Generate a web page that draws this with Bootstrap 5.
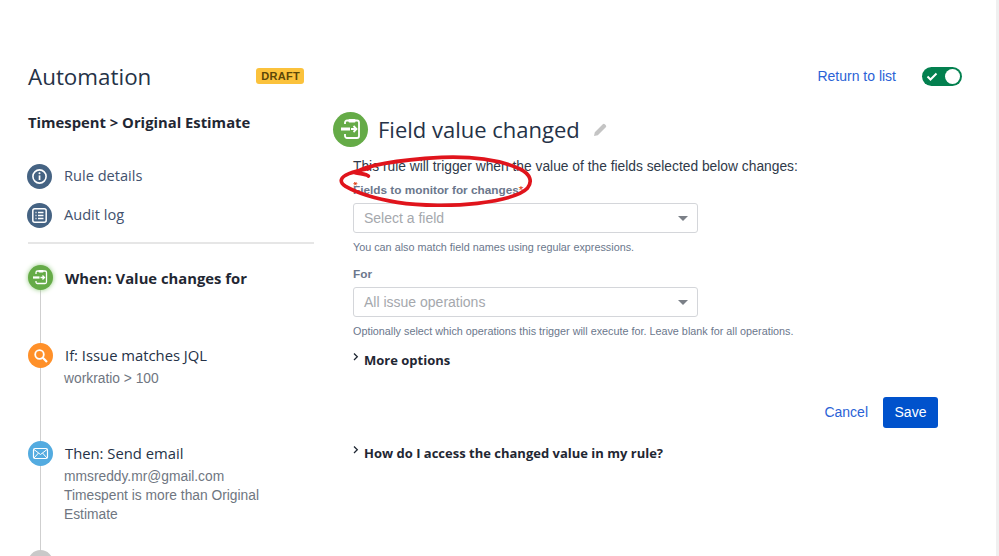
<!DOCTYPE html>
<html lang="en">
<head>
<meta charset="utf-8">
<title>Automation</title>
<link href="https://cdn.jsdelivr.net/npm/bootstrap@5.3.0/dist/css/bootstrap.min.css" rel="stylesheet">
<style>
html,body{height:100%;overflow:hidden}
body{font-family:"Liberation Sans",Arial,sans-serif;color:#172b4d;background:#fff;border-right:3px solid #f0f0f0}
.page-wrap{position:relative;height:556px;overflow:hidden;padding:62px 34px 0 28px}
.head-row{height:32px}
.page-title{font-family:"Open Sans",sans-serif;font-size:22.4px;font-weight:400;color:#253247;margin:-2px 0 0;line-height:32px}
.draft-tag{background:#fbc23c;color:#5c4708;font-size:11px;font-weight:700;letter-spacing:.3px;border-radius:3px;padding:0 5px;line-height:16px;height:16px;margin:-5px 0 0 105px;width:48px;text-align:center}
.return-link{font-size:14px;color:#2a62d6;text-decoration:none;margin:-4px 26px 0 0}
.flip{width:40px;height:19px;border-radius:10px;background:#03804f;padding:2px;margin-top:-4px}
.flip i{display:block;width:15px;height:15px;border-radius:50%;background:#fff}
.side-col{width:286px;flex:none}
.main-col{flex:1;margin-left:19px;min-width:0}
.rule-name{font-family:"Open Sans",sans-serif;font-weight:700;font-size:14.8px;color:#1f2733;line-height:20px;margin:18px 0 0}
.nav-line{display:flex;align-items:center;height:26px;font-family:"Open Sans",sans-serif;font-size:14.6px;color:#42526e}
.nav-first{margin-top:31px}
.nav-second{margin-top:13px}
.ic{width:25px;height:25px;border-radius:50%;flex:none;display:flex;align-items:center;justify-content:center;margin-right:12px;margin-left:-1px}
.ic-blue{background:#456383}
.ic-green{background:#65ab47;box-shadow:0 0 5px #8fc97a}
.ic-orange{background:#ff9029}
.ic-sky{background:#53abe0}
.ic-gray{background:#c9c9c9}
.side-rule{border-top:2px solid #e6e6e6;margin:14px 0 0}
.flow-list{position:relative;margin-top:21px}
.flow-list::before{content:"";position:absolute;left:12px;top:24px;bottom:-60px;width:1px;background:#cfcfcf}
.step{position:relative;display:flex}
.step-when{height:78px}
.step-if{height:98px}
.step-then{height:109px}
.step-head{font-family:"Open Sans",sans-serif;font-size:14.8px;color:#253247;line-height:20px;margin-top:2px}
.step-when .step-head{font-weight:700;color:#1f2733;margin-top:3px}
.step-sub{font-size:13.8px;color:#6f7681;line-height:19px;margin-top:4px;margin-left:-1px}
.step .ic{margin-left:0;margin-right:12px}
.trigger-head{margin-top:16px;height:38px}
.trigger-ic{width:35px;height:35px;border-radius:50%;background:#65ab47;display:flex;align-items:center;justify-content:center;flex:none;margin-right:10px}
.trigger-title{font-family:"Open Sans",sans-serif;font-size:22px;color:#253247;margin:0;line-height:35px}
.pencil{margin-left:13px;margin-top:2px}
.form-area{padding-left:20px;width:465px}
.intro{font-size:13.8px;color:#2f3a4a;line-height:18px;white-space:nowrap;margin-top:10px}
.fld-label{font-size:11.8px;font-weight:700;color:#6b778c;line-height:16px;margin:6px 0 5px;white-space:nowrap}
.fld-label-for{margin-top:12px}
.req{color:#de350b;font-weight:400}
.fake-select{width:345px;height:30px;border:1px solid #d4d6da;border-radius:3px;padding:0 10px;font-size:14px;color:#a5a8ad;line-height:28px;display:flex;justify-content:space-between;align-items:center}
.caret-down{width:0;height:0;border-left:5.5px solid transparent;border-right:5.5px solid transparent;border-top:5.5px solid #7b8087;margin-right:-1px}
.fld-help{font-size:10.8px;color:#6b778c;line-height:14px;margin-top:7px;white-space:nowrap}
.fold{font-family:"Open Sans",sans-serif;font-weight:700;font-size:13px;color:#1f2733;line-height:18px;display:flex;gap:5px;white-space:nowrap}
.fold svg{flex:none;margin-top:1px}
.fold-more{margin-top:13px}
.fold-how{margin-top:16px}
.act-row{width:585px;margin-top:28px}
.cancel-link{font-size:14px;color:#2a62d6;text-decoration:none;margin-right:15px}
.save-btn{background:#0052cc;color:#fff;border:0;border-radius:3px;font-size:14px;padding:0;width:55px;height:31px}
.save-btn:hover{background:#0052cc;color:#fff}
.scribble{position:absolute;left:335px;top:155px;pointer-events:none}
</style>
</head>
<body>
<div class="page-wrap">
  <div class="head-row d-flex align-items-center">
    <h1 class="page-title">Automation</h1>
    <span class="draft-tag">DRAFT</span>
    <a class="return-link ms-auto" href="#">Return to list</a>
    <div class="flip d-flex align-items-center justify-content-between">
      <svg width="16" height="15" viewBox="0 0 16 15"><path d="M3.500 7.500l3 3 6-6" fill="none" stroke="#fff" stroke-width="2"/></svg>
      <i></i>
    </div>
  </div>
  <div class="d-flex">
    <div class="side-col">
      <p class="rule-name">Timespent &gt; Original Estimate</p>
      <div class="nav-line nav-first">
        <span class="ic ic-blue"><svg width="17" height="17" viewBox="0 0 17 17"><circle cx="8.500" cy="8.500" r="6.600" fill="none" stroke="#fff" stroke-width="1.600"/><rect x="7.700" y="7.400" width="1.700" height="4.600" fill="#fff"/><circle cx="8.500" cy="5.300" r="1" fill="#fff"/></svg></span>Rule details
      </div>
      <div class="nav-line nav-second">
        <span class="ic ic-blue"><svg width="17" height="17" viewBox="0 0 17 17"><rect x="1.800" y="1.800" width="13.400" height="13.400" rx="2" fill="none" stroke="#fff" stroke-width="1.500"/><path d="M4.500 5.500h1M7 5.500h5.500M4.500 8.500h1M7 8.500h5.500M4.500 11.500h1M7 11.500h5.500" stroke="#fff" stroke-width="1.300"/></svg></span>Audit log
      </div>
      <hr class="side-rule opacity-100">
      <div class="flow-list">
        <div class="step step-when">
          <span class="ic ic-green"><svg width="17" height="17" viewBox="0 0 17 17"><path d="M4 5V3.500A1.500 1.500 0 0 1 5.500 2H13a1.500 1.500 0 0 1 1.500 1.500V13a1.500 1.500 0 0 1-1.500 1.500H5.500A1.500 1.500 0 0 1 4 13v-1" fill="none" stroke="#fff" stroke-width="1.300"/><rect x="6.500" y="1" width="5" height="2.500" rx=".8" fill="#fff"/><rect x="1" y="7.400" width="6.500" height="2.200" fill="#fff"/><path d="M8.500 8.500h3.500M10.500 6.500l2 2-2 2" fill="none" stroke="#fff" stroke-width="1.300"/></svg></span>
          <div class="step-head">When: Value changes for</div>
        </div>
        <div class="step step-if">
          <span class="ic ic-orange"><svg width="16" height="16" viewBox="0 0 16 16"><circle cx="6.500" cy="6.500" r="4.300" fill="none" stroke="#fff" stroke-width="1.800"/><path d="M9.800 9.800l4.200 4.200" stroke="#fff" stroke-width="2.200"/></svg></span>
          <div><div class="step-head">If: Issue matches JQL</div><div class="step-sub">workratio &gt; 100</div></div>
        </div>
        <div class="step step-then">
          <span class="ic ic-sky"><svg width="17" height="17" viewBox="0 0 17 17"><rect x="1.500" y="3.500" width="14" height="10" rx="1.500" fill="none" stroke="#fff" stroke-width="1.200"/><path d="M2 4.500l6.500 5 6.500-5M2 13l4.500-5M15 13l-4.500-5" fill="none" stroke="#fff" stroke-width="1"/></svg></span>
          <div><div class="step-head">Then: Send email</div><div class="step-sub">mmsreddy.mr@gmail.com<br>Timespent is more than Original<br>Estimate</div></div>
        </div>
        <div class="step"><span class="ic ic-gray"></span></div>
      </div>
    </div>
    <div class="main-col">
      <div class="trigger-head d-flex align-items-center">
        <span class="trigger-ic"><svg width="24" height="24" viewBox="0 0 24 24"><path d="M6 7V5.500A2 2 0 0 1 8 3.500h10a2 2 0 0 1 2 2V19a2 2 0 0 1-2 2H8a2 2 0 0 1-2-2v-2" fill="none" stroke="#fff" stroke-width="1.800"/><rect x="9.500" y="2" width="7" height="3.500" rx="1" fill="#fff"/><rect x="2" y="10.500" width="9" height="3" fill="#fff"/><path d="M12 12h5M14.500 9l3 3-3 3" fill="none" stroke="#fff" stroke-width="1.800"/></svg></span>
        <h2 class="trigger-title">Field value changed</h2>
        <svg class="pencil" width="14" height="14" viewBox="0 0 14 14"><path d="M1 13l.8-3.800L9.800 1.200a1.400 1.400 0 0 1 2 0l1 1a1.400 1.400 0 0 1 0 2L4.800 12.200z" fill="#c4c4c4"/></svg>
      </div>
      <div class="form-area">
        <div class="intro">This rule will trigger when the value of the fields selected below changes:</div>
        <div class="fld-label">Fields to monitor for changes<span class="req">*</span></div>
        <div class="fake-select"><span>Select a field</span><span class="caret-down"></span></div>
        <div class="fld-help">You can also match field names using regular expressions.</div>
        <div class="fld-label fld-label-for">For</div>
        <div class="fake-select"><span>All issue operations</span><span class="caret-down"></span></div>
        <div class="fld-help">Optionally select which operations this trigger will execute for. Leave blank for all operations.</div>
        <div class="fold fold-more"><svg width="6" height="10" viewBox="0 0 6 10"><path d="M1 1.500l3.300 3.300L1 8" fill="none" stroke="#1f2733" stroke-width="1.300"/></svg>More options</div>
        <div class="act-row d-flex justify-content-end align-items-center">
          <a class="cancel-link" href="#">Cancel</a>
          <button class="btn save-btn" type="button">Save</button>
        </div>
        <div class="fold fold-how"><svg width="6" height="10" viewBox="0 0 6 10"><path d="M1 1.500l3.300 3.300L1 8" fill="none" stroke="#1f2733" stroke-width="1.300"/></svg>How do I access the changed value in my rule?</div>
      </div>
    </div>
  </div>
  <svg class="scribble" width="200" height="55" viewBox="30 165 600 165"><path d="M130 228C125 222 110 222 90 218 120 198 210 180 350 172c80-3 170 5 235 35 32 16 38 38 22 58-22 24-80 36-150 45-70 8-170 8-240-3-60-10-115-25-155-48-22-14-15-28 10-38 20-8 40-12 60-16" fill="none" stroke="#e0141c" stroke-width="11" stroke-linecap="round" stroke-linejoin="round"/><path d="M88 246l6 10M94 246l-6 10M85 251h12" stroke="#de350b" stroke-width="2.500"/></svg>
</div>
</body>
</html>
